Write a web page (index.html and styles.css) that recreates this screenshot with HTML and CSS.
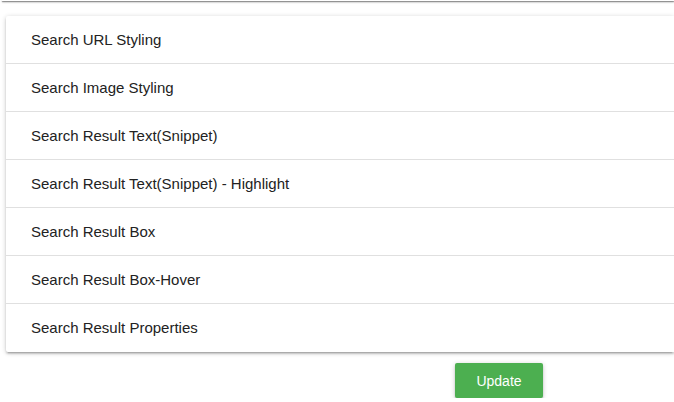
FILE: index.html
```html
<!DOCTYPE html>
<html lang="en">
<head>
  <meta charset="UTF-8" />
  <title>Search Styling</title>
  <link rel="stylesheet" href="styles.css">
</head>
<body>
  <div class="page">
    <div class="top-card"></div>

    <ul class="collection">
      <li class="collection-item">Search URL Styling</li>
      <li class="collection-item">Search Image Styling</li>
      <li class="collection-item">Search Result Text(Snippet)</li>
      <li class="collection-item">Search Result Text(Snippet) - Highlight</li>
      <li class="collection-item">Search Result Box</li>
      <li class="collection-item">Search Result Box-Hover</li>
      <li class="collection-item">Search Result Properties</li>
    </ul>

    <div class="actions">
      <button type="button" class="btn">Update</button>
    </div>
  </div>
</body>
</html>
```

FILE: styles.css
```css
* { box-sizing: border-box; }
html, body {
  margin: 0; padding: 0;
  background: #fff;
  overflow: hidden;
}
body {
  font-family: "Liberation Sans", Arial, sans-serif;
  color: #222;
}
.page {
  width: 100%;
}
.top-card {
  height: 1px;
  margin: 0 0 0 2px;
  background: #fff;
  box-shadow: 0 1px 2px 0 rgba(0,0,0,0.5), 0 1px 1px 0 rgba(0,0,0,0.3);
}
.collection {
  list-style: none;
  margin: 15px 0 0 6px;
  padding: 0;
  background: #fff;
  border-radius: 2px 0 0 2px;
  box-shadow: 0 2px 2px 0 rgba(0,0,0,0.14), 0 3px 1px -2px rgba(0,0,0,0.12), 0 1px 5px 0 rgba(0,0,0,0.2);
}
.collection-item {
  height: 48px;
  line-height: 47px;
  padding: 0 25px;
  font-size: 15px;
  border-bottom: 1px solid #e0e0e0;
}
.collection-item:last-child {
  border-bottom: none;
}
.actions {
  margin-top: 11px;
  padding-left: 324px;
  display: flex;
  justify-content: center;
}
.btn {
  height: 35px;
  padding: 0 21px;
  border: none;
  border-radius: 2px;
  background: #4caf50;
  color: #fff;
  font-family: "Liberation Sans", Arial, sans-serif;
  font-size: 14px;
  cursor: pointer;
  box-shadow: 0 2px 2px 0 rgba(0,0,0,0.14), 0 3px 1px -2px rgba(0,0,0,0.12), 0 1px 5px 0 rgba(0,0,0,0.2);
}
.btn:hover {
  background: #5cb860;
}
```
